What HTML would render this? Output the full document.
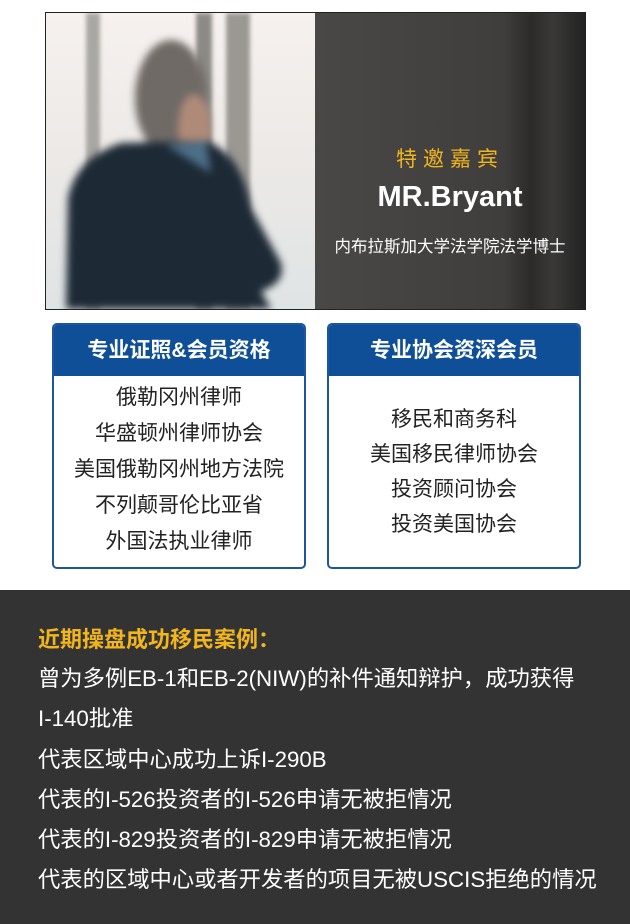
<!DOCTYPE html>
<html><head><meta charset="utf-8"><style>
*{margin:0;padding:0;box-sizing:border-box}
body{width:630px;height:924px;background:#fff;font-family:"Liberation Sans","Noto Sans CJK SC",sans-serif;position:relative;overflow:hidden}
.photo{position:absolute;left:45px;top:12px;width:541px;height:298px;border:1px solid #222;overflow:hidden;background:#464442}
.left{position:absolute;left:0;top:0;width:269px;height:296px;background:linear-gradient(180deg,#f6f1ee 0%,#ece9e6 50%,#dfe4e5 100%)}
.win{position:absolute;top:0;height:296px;background:#8d8a86;filter:blur(2px)}
.right{position:absolute;left:269px;top:0;width:270px;height:296px;background:linear-gradient(90deg,#4a4846 0%,#403e3c 70%,#2c2b2a 80%,#3a3938 88%,#222 100%)}
.box{position:absolute;top:323px;width:254px;height:246px;border:2px solid #1d56a0;border-radius:5px;overflow:hidden;background:#fff}
.box .h{height:51px;background:#0f4f98;color:#fff;font-weight:bold;font-size:21px;text-align:center;line-height:51px}
.box .b{text-align:center;font-size:21px;color:#222;line-height:36px}
.dark{position:absolute;left:0;top:590px;width:630px;height:334px;background:#333}
.dark p{position:absolute;left:38px;font-size:22.3px;color:#fff;white-space:nowrap}
</style></head><body>
<div class="photo">
 <div class="left">
  <div class="win" style="left:40px;width:14px;background:#a9a7a3"></div>
  <div class="win" style="left:150px;width:16px"></div>
  <div class="win" style="left:180px;width:24px;background:#9b9894"></div>
  <svg width="269" height="296" style="position:absolute;left:0;top:0;filter:blur(4px)">
   <ellipse cx="125" cy="85" rx="36" ry="58" fill="#6f6a66"/>
   <ellipse cx="148" cy="115" rx="16" ry="34" fill="#b08a78"/>
   <path d="M20 296 L22 185 Q30 145 75 130 L160 128 Q195 140 205 195 L235 250 Q240 270 215 278 L225 296 Z" fill="#1d2a36"/>
   <path d="M120 132 L160 128 L165 160 Z" fill="#4d6f88"/>
  </svg>
 </div>
 <div class="right"></div>
 <div style="position:absolute;left:269px;width:270px;top:130px;text-align:center;color:#f2b51c;font-size:21px;letter-spacing:6px">特邀嘉宾</div>
 <div style="position:absolute;left:269px;width:270px;top:168px;text-align:center;color:#fff;font-size:29px;font-weight:bold">MR.Bryant</div>
 <div style="position:absolute;left:269px;width:270px;top:220px;text-align:center;color:#fff;font-size:16.5px">内布拉斯加大学法学院法学博士</div>
</div>
<div class="box" style="left:52px"><div class="h">专业证照&amp;会员资格</div><div class="b" style="padding-top:4px">俄勒冈州律师<br>华盛顿州律师协会<br>美国俄勒冈州地方法院<br>不列颠哥伦比亚省<br>外国法执业律师</div></div>
<div class="box" style="left:327px"><div class="h">专业协会资深会员</div><div class="b" style="padding-top:26px;line-height:35px">移民和商务科<br>美国移民律师协会<br>投资顾问协会<br>投资美国协会</div></div>
<div class="dark">
 <p style="top:32px;color:#f2b51c;font-weight:bold;font-size:22px">近期操盘成功移民案例：</p>
 <p style="top:71px">曾为多例EB-1和EB-2(NIW)的补件通知辩护，成功获得</p>
 <p style="top:111px">I-140批准</p>
 <p style="top:152px">代表区域中心成功上诉I-290B</p>
 <p style="top:192px">代表的I-526投资者的I-526申请无被拒情况</p>
 <p style="top:232px">代表的I-829投资者的I-829申请无被拒情况</p>
 <p style="top:272px">代表的区域中心或者开发者的项目无被USCIS拒绝的情况</p>
</div>
</body></html>
